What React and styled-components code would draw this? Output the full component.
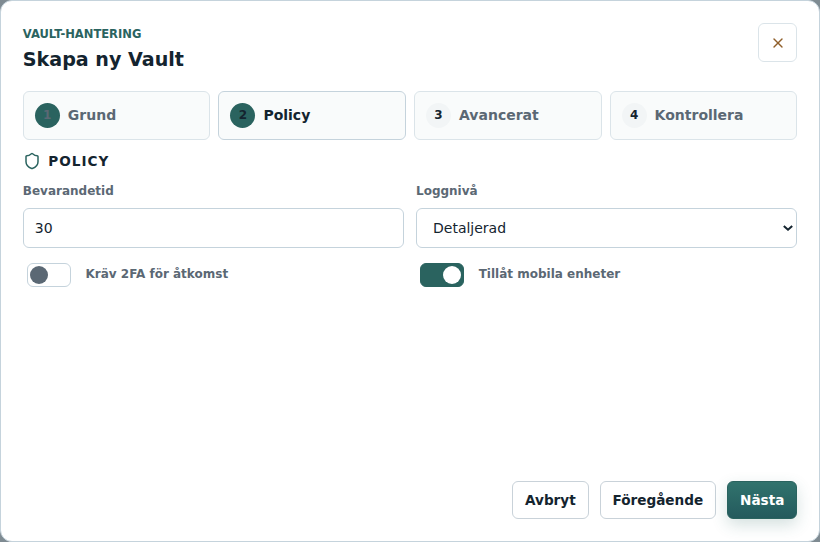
import React from "react";
import styled, { createGlobalStyle } from "styled-components";

const Global = createGlobalStyle`
  html, body { margin: 0; padding: 0; background: #7f8b92; }
  * { box-sizing: border-box; }
  body { font-family: "DejaVu Sans", sans-serif; }
`;

const Modal = styled.div`
  width: 820px;
  height: 542px;
  background: #fff;
  border: 1px solid #c5d3dc;
  border-radius: 12px;
  padding: 22px 21.8px;
  display: flex;
  flex-direction: column;
  overflow: hidden;
`;

const Header = styled.header`
  display: flex;
  justify-content: space-between;
  align-items: flex-start;
  height: 68px;
`;

const Eyebrow = styled.div`
  margin-top: 3.5px;
  font-size: 11.52px;
  line-height: 15px;
  font-weight: 700;
  color: #2a635f;
`;

const Title = styled.h2`
  margin: 6px 0 0;
  font-size: 19.1px;
  line-height: 24px;
  font-weight: 700;
  color: #14242f;
`;

const CloseButton = styled.button`
  width: 39px;
  height: 39px;
  padding: 0;
  display: flex;
  align-items: center;
  justify-content: center;
  background: #fff;
  border: 1px solid #dbe4e9;
  border-radius: 6px;
  color: #8f5f2a;
`;

const Steps = styled.div`
  display: grid;
  grid-template-columns: repeat(4, 1fr);
  gap: 8px;
  height: 49px;
`;

const Step = styled.div`
  display: flex;
  align-items: center;
  gap: 8px;
  padding: 0 11px 1px;
  background: #f9fbfb;
  border: 1px solid ${(p) => (p.$active ? "#c5d3dc" : "#dbe4e9")};
  border-radius: 6px;
  font-size: 14px;
  font-weight: 700;
  color: ${(p) => (p.$active ? "#14242f" : "#5b6874")};
`;

const Badge = styled.span`
  width: 25px;
  height: 25px;
  flex: none;
  border-radius: 50%;
  display: flex;
  align-items: center;
  justify-content: center;
  font-size: 12px;
  font-weight: 700;
  background: ${(p) => (p.$filled ? "#2a635f" : "#f2f5f6")};
  color: ${(p) => (p.$muted ? "#5b6874" : "#14242f")};
`;

const Section = styled.div`
  display: flex;
  align-items: center;
  gap: 7.5px;
  margin-top: 10px;
  height: 21px;
  font-size: 13.6px;
  font-weight: 700;
  letter-spacing: 1px;
  color: #14242f;
`;

const Fields = styled.div`
  display: grid;
  grid-template-columns: 1fr 1fr;
  column-gap: 12px;
  margin-top: 13px;
`;

const Field = styled.div`
  display: flex;
  flex-direction: column;
`;

const Label = styled.label`
  font-size: 12px;
  line-height: 15px;
  font-weight: 700;
  color: #5b6874;
  margin-bottom: 9px;
`;

const Input = styled.input`
  height: 40px;
  width: 100%;
  padding: 0 11px;
  border: 1px solid #c5d3dc;
  border-radius: 6px;
  background: #fff;
  font: 400 14px "DejaVu Sans", sans-serif;
  color: #14242f;
  outline: none;
`;

const Select = styled.select`
  appearance: none;
  height: 40px;
  width: 100%;
  padding: 0 24px 0 16px;
  border: 1px solid #c5d3dc;
  border-radius: 6px;
  background: #fff url("data:image/svg+xml,%3Csvg xmlns='http://www.w3.org/2000/svg' width='10' height='6' viewBox='0 0 10 6'%3E%3Cpath d='M.8.9 5 4.7 9.2.9' fill='none' stroke='%2314242f' stroke-width='2'/%3E%3C/svg%3E") no-repeat right 3px center;
  font: 400 14px "DejaVu Sans", sans-serif;
  color: #14242f;
  outline: none;
`;

const ToggleRow = styled.div`
  display: flex;
  align-items: center;
  gap: 14.7px;
  padding-left: 4px;
  margin-top: 15px;
  height: 24px;
  padding-bottom: 2px;
  font-size: 12px;
  font-weight: 700;
  color: #5b6874;
`;

const Toggle = styled.span`
  position: relative;
  width: 44px;
  height: 24px;
  margin-bottom: -2px;
  flex: none;
  border-radius: 6px;
  background: ${(p) => (p.$on ? "#2a635f" : "#fff")};
  border: 1px solid ${(p) => (p.$on ? "#2a635f" : "#c5d3dc")};

  &::after {
    content: "";
    position: absolute;
    top: 2px;
    left: ${(p) => (p.$on ? "22px" : "2px")};
    width: 18px;
    height: 18px;
    border-radius: 50%;
    background: ${(p) => (p.$on ? "#fff" : "#5b6874")};
  }
`;

const Footer = styled.footer`
  margin-top: auto;
  display: flex;
  justify-content: flex-end;
  gap: 11px;
`;

const Button = styled.button`
  height: 38px;
  padding: 0 11.9px;
  border-radius: 6px;
  border: 1px solid ${(p) => (p.$primary ? "#2a635f" : "#c9d2d9")};
  background: ${(p) =>
    p.$primary ? "linear-gradient(180deg, #31736d, #245a5d)" : "#fff"};
  box-shadow: ${(p) => (p.$primary ? "0 6px 16px rgba(42, 99, 95, 0.2)" : "none")};
  color: ${(p) => (p.$primary ? "#fff" : "#14242f")};
  font: 700 13.6px "DejaVu Sans", sans-serif;
`;

const steps = [
  { n: 1, label: "Grund", filled: true, muted: true },
  { n: 2, label: "Policy", filled: true, active: true },
  { n: 3, label: "Avancerat" },
  { n: 4, label: "Kontrollera" },
];

export default function App() {
  return (
    <>
      <Global />
      <Modal>
        <Header>
          <div>
            <Eyebrow>VAULT-HANTERING</Eyebrow>
            <Title>Skapa ny Vault</Title>
          </div>
          <CloseButton aria-label="Stäng">
            <svg width="16" height="16" viewBox="0 0 24 24" fill="none" stroke="currentColor" strokeWidth="2" strokeLinecap="round" strokeLinejoin="round">
              <path d="M18 6 6 18" />
              <path d="m6 6 12 12" />
            </svg>
          </CloseButton>
        </Header>
        <Steps>
          {steps.map((s) => (
            <Step key={s.n} $active={s.active}>
              <Badge $filled={s.filled} $muted={s.muted}>{s.n}</Badge>
              {s.label}
            </Step>
          ))}
        </Steps>
        <Section>
          <svg width="18" height="18" viewBox="0 0 24 24" fill="none" stroke="#2a635f" strokeWidth="2" strokeLinecap="round" strokeLinejoin="round">
            <path d="M20 13c0 5-3.5 7.5-7.66 8.95a1 1 0 0 1-.67-.01C7.5 20.5 4 18 4 13V6a1 1 0 0 1 1-1c2 0 4.5-1.2 6.24-2.72a1.17 1.17 0 0 1 1.52 0C14.51 3.81 17 5 19 5a1 1 0 0 1 1 1z" />
          </svg>
          POLICY
        </Section>
        <Fields>
          <Field>
            <Label>Bevarandetid</Label>
            <Input defaultValue="30" />
            <ToggleRow>
              <Toggle />
              Kräv 2FA för åtkomst
            </ToggleRow>
          </Field>
          <Field>
            <Label>Loggnivå</Label>
            <Select defaultValue="Detaljerad">
              <option>Detaljerad</option>
            </Select>
            <ToggleRow>
              <Toggle $on />
              Tillåt mobila enheter
            </ToggleRow>
          </Field>
        </Fields>
        <Footer>
          <Button>Avbryt</Button>
          <Button>Föregående</Button>
          <Button $primary>Nästa</Button>
        </Footer>
      </Modal>
    </>
  );
}
